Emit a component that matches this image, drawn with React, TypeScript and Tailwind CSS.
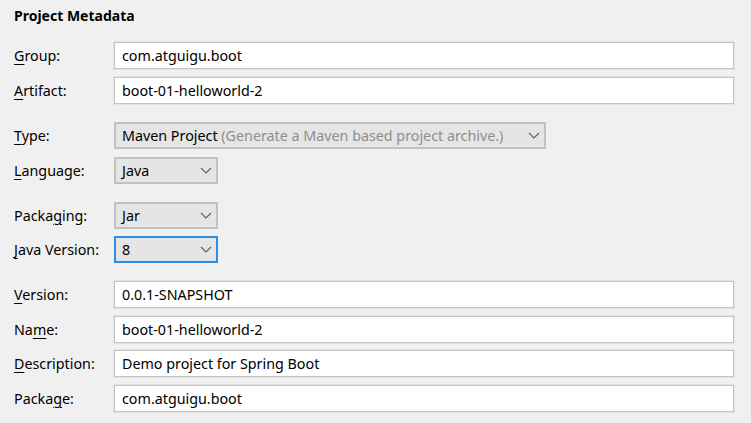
import React from "react";

const font = "font-['Segoe_UI','Noto_Sans','Liberation_Sans',sans-serif]";

// label with one underlined mnemonic letter
const Label = ({ text, at }: { text: string; at: number }) => (
  <div className="w-[100px] shrink-0 text-[14.3px] text-black">
    {text.slice(0, at)}
    <span className="underline underline-offset-[3px]">{text[at]}</span>
    {text.slice(at + 1)}
  </div>
);

const TextRow = ({
  label,
  at,
  value,
  className = "",
}: {
  label: string;
  at: number;
  value: string;
  className?: string;
}) => (
  <div className={`flex items-center ${className}`}>
    <Label text={label} at={at} />
    <div className="h-[27px] w-[620px] flex items-center bg-white border border-[#c4c4c4] shadow-[0_0_0_1px_#e3e3e3] px-[7px] text-[14.3px] text-black">
      {value}
    </div>
  </div>
);

const Chevron = () => (
  <svg width="12" height="7" viewBox="0 0 12 7" className="shrink-0">
    <polyline
      points="1,1 6,6 11,1"
      fill="none"
      stroke="#606060"
      strokeWidth="1.2"
    />
  </svg>
);

const ComboRow = ({
  label,
  at,
  value,
  hint,
  width,
  focused = false,
  className = "",
}: {
  label: string;
  at: number;
  value: string;
  hint?: string;
  width: string;
  focused?: boolean;
  className?: string;
}) => (
  <div className={`flex items-center ${className}`}>
    <Label text={label} at={at} />
    <div
      className={`h-[27px] ${width} flex items-center justify-between bg-[#e5e5e5] border-2 ${
        focused ? "border-[#2d8fe3]" : "border-[#c2c2c2]"
      } pl-[6px] pr-[4px] text-[14.3px] text-black`}
    >
      <span>
        {value}
        {hint && <span className="text-[#8e8e8e]"> {hint}</span>}
      </span>
      <Chevron />
    </div>
  </div>
);

export default function App() {
  return (
    <div className={`w-[751px] h-[423px] bg-[#f0f0f0] pl-[14px] pt-[6px] ${font}`}>
      <div className="text-[14px] font-bold text-black leading-[20px]">
        Project Metadata
      </div>
      <TextRow className="mt-[16px]" label="Group:" at={0} value="com.atguigu.boot" />
      <TextRow className="mt-[8px]" label="Artifact:" at={0} value="boot-01-helloworld-2" />
      <ComboRow
        className="mt-[18px]"
        label="Type:"
        at={0}
        value="Maven Project"
        hint="(Generate a Maven based project archive.)"
        width="w-[432px]"
      />
      <ComboRow className="mt-[8px]" label="Language:" at={0} value="Java" width="w-[104px]" />
      <ComboRow className="mt-[18px]" label="Packaging:" at={5} value="Jar" width="w-[104px]" />
      <ComboRow
        className="mt-[7px]"
        label="Java Version:"
        at={0}
        value="8"
        width="w-[104px]"
        focused
      />
      <TextRow className="mt-[18px]" label="Version:" at={0} value="0.0.1-SNAPSHOT" />
      <TextRow className="mt-[8px]" label="Name:" at={2} value="boot-01-helloworld-2" />
      <TextRow className="mt-[7px]" label="Description:" at={0} value="Demo project for Spring Boot" />
      <TextRow className="mt-[8px]" label="Package:" at={5} value="com.atguigu.boot" />
    </div>
  );
}
